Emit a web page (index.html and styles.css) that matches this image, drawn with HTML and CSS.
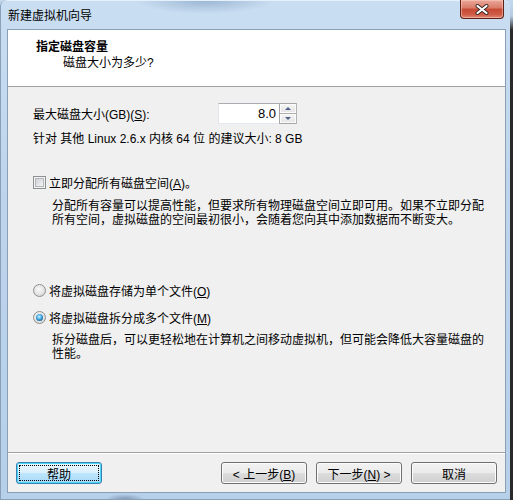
FILE: index.html
```html
<!DOCTYPE html>
<html lang="zh-CN">
<head>
    <meta charset="UTF-8">
    <title>新建虚拟机向导</title>
    <link rel="stylesheet" href="styles.css">
</head>
<body>

<div class="window">
    <div class="titlebar">
        <span class="title">新建虚拟机向导</span>
        <div class="close">
            <svg width="14" height="11" viewBox="0 0 14 11">
                <path d="M2.5 2 L11.5 9 M11.5 2 L2.5 9" stroke="#3a2622" stroke-width="4" stroke-linecap="round"/>
                <path d="M2.5 2 L11.5 9 M11.5 2 L2.5 9" stroke="#ffffff" stroke-width="2.2" stroke-linecap="round"/>
            </svg>
        </div>
    </div>

    <div class="client">
        <div class="header">
            <div class="heading">指定磁盘容量</div>
            <div class="subheading">磁盘大小为多少?</div>
        </div>

        <div class="content">
            <div class="size-row">
                <label class="size-label">最大磁盘大小(GB)(<u>S</u>):</label>
                <div class="spin">
                    <div class="spin-value">8.0</div>
                    <div class="spin-buttons">
                        <span class="spin-btn"><i class="arrow-up"></i></span>
                        <span class="spin-btn"><i class="arrow-down"></i></span>
                    </div>
                </div>
            </div>
            <p class="hint">针对 其他 Linux 2.6.x 内核 64 位 的建议大小: 8 GB</p>

            <div class="option check-row">
                <span class="checkbox"></span>
                <span>立即分配所有磁盘空间(<u>A</u>)。</span>
            </div>
            <p class="desc desc-alloc">分配所有容量可以提高性能，但要求所有物理磁盘空间立即可用。如果不立即分配所有空间，虚拟磁盘的空间最初很小，会随着您向其中添加数据而不断变大。</p>

            <div class="option radio-single">
                <span class="radio"></span>
                <span>将虚拟磁盘存储为单个文件(<u>O</u>)</span>
            </div>
            <div class="option radio-split">
                <span class="radio checked"></span>
                <span>将虚拟磁盘拆分成多个文件(<u>M</u>)</span>
            </div>
            <p class="desc desc-split">拆分磁盘后，可以更轻松地在计算机之间移动虚拟机，但可能会降低大容量磁盘的性能。</p>
        </div>

        <!-- wizard buttons -->
        <div class="footer">
            <button class="btn default">帮助</button>
            <div class="nav">
                <button class="btn">&lt; 上一步(<u>B</u>)</button>
                <button class="btn">下一步(<u>N</u>) &gt;</button>
                <button class="btn">取消</button>
            </div>
        </div>
    </div>
</div>

</body>
</html>
```

FILE: styles.css
```css
/* Basic styling */
body {
    margin: 0;
    background: linear-gradient(#c3d9ee 0, #b5cbe2 16px, #2a2a2a 30px);
    font-family: "Liberation Sans", "Noto Sans CJK SC", sans-serif;
    font-size: 12px;
    color: #000;
}

/* Aero window frame */
.window {
    width: 510px;
    height: 500px;
    box-sizing: border-box;
    padding: 0 4px 7px 7px;
    display: flex;
    flex-direction: column;
    border-radius: 6px 6px 0 0;
    background:
        radial-gradient(ellipse 70px 14px at 205px 0, rgba(95, 130, 170, 0.45), transparent),
        radial-gradient(ellipse 20px 6px at 125px 500px, rgba(60, 80, 110, 0.5), transparent),
        linear-gradient(#cadef2, #bcd4ec 40%, #b7d0ea);
    box-shadow: inset 1px 0 #8aa0b8, inset 0 -1px #8aa0b8, inset 0 1px #e6f0fa;
}

.titlebar {
    height: 29px;
    display: flex;
    justify-content: space-between;
    align-items: flex-start;
}

.title {
    padding: 9px 0 0 1px;
    line-height: 14px;
}

.close {
    width: 44px;
    height: 19px;
    margin-right: 2px;
    box-sizing: border-box;
    border: 1px solid #5e2118;
    border-top: none;
    border-radius: 0 0 4px 4px;
    background: linear-gradient(#eaa89a, #d97b67 45%, #c64a34 50%, #cf5b45 80%, #e08a74);
    box-shadow: inset 0 0 0 1px rgba(255, 210, 200, 0.5);
    display: flex;
    align-items: center;
    justify-content: center;
}

/* Client area */
.client {
    flex: 1;
    display: flex;
    flex-direction: column;
    border: 1px solid #8b9fb4;
    background: #f0f0f0;
}

.header {
    height: 57px;
    box-sizing: border-box;
    padding-top: 9px;
    background: #fff;
    border-bottom: 1px solid #a0a0a0;
}

.heading {
    font-weight: bold;
    line-height: 16px;
    padding-left: 28px;
}

.subheading {
    line-height: 16px;
    padding-left: 55px;
}

.content {
    flex: 1;
    padding: 16px 0 0 25px;
}

.size-row {
    display: flex;
    align-items: center;
    height: 21px;
}

.size-label {
    width: 185px;
}

/* Spin box */
.spin {
    width: 79px;
    height: 21px;
    box-sizing: border-box;
    display: flex;
    border: 1px solid;
    border-color: #abadb3 #dbdfe6 #e3e9ef #e2e3ea;
    background: #fff;
}

.spin-value {
    flex: 1;
    text-align: right;
    padding-right: 3px;
    line-height: 19px;
    font-size: 13px;
}

.spin-buttons {
    width: 16px;
    display: flex;
    flex-direction: column;
    border: 1px solid #a6a6a6;
    border-right-color: #b4b4b4;
    margin: -1px -1px -1px 0;
}

.spin-btn {
    flex: 1;
    display: flex;
    align-items: center;
    justify-content: center;
    background: linear-gradient(#f6f6f6, #e3e3e3);
    box-shadow: inset 0 0 0 1px #fcfcfc;
}

.spin-btn + .spin-btn {
    border-top: 1px solid #b0b0b0;
}

.arrow-up,
.arrow-down {
    width: 0;
    height: 0;
    border-left: 3px solid transparent;
    border-right: 3px solid transparent;
}

.arrow-up {
    border-bottom: 3px solid #4d5f88;
}

.arrow-down {
    border-top: 3px solid #4d5f88;
}

.hint {
    margin: 7px 0 0;
    line-height: 16px;
}

/* Check box and radio options */
.option {
    display: flex;
    align-items: center;
    gap: 3px;
    height: 16px;
}

.check-row {
    margin-top: 27px;
}

.radio-single {
    margin-top: 55px;
}

.radio-split {
    margin-top: 11px;
}

.checkbox {
    width: 13px;
    height: 13px;
    box-sizing: border-box;
    padding: 1px;
    border: 1px solid #8e8f8f;
    background: #f4f4f4;
}

.checkbox::before {
    content: "";
    display: block;
    height: 100%;
    box-sizing: border-box;
    border: 1px solid #b3b6bb;
    background: linear-gradient(135deg, #cdd0d5, #f6f6f6);
}

.radio {
    width: 13px;
    height: 13px;
    box-sizing: border-box;
    border-radius: 50%;
    border: 1px solid #8e8f8f;
    background: radial-gradient(circle at 45% 40%, #f9f9f9, #e4e4e4 55%, #c9cacc);
    display: flex;
    align-items: center;
    justify-content: center;
}

.radio.checked::before {
    content: "";
    width: 7px;
    height: 7px;
    border-radius: 50%;
    background: radial-gradient(circle at 45% 40%, #d6f3ff, #48b2ec 40%, #1d5f93 75%, #173f66);
}

.desc {
    width: 436px;
    margin: 0 0 0 19px;
    line-height: 14px;
}

.desc-alloc {
    margin-top: 9px;
}

.desc-split {
    margin-top: 8px;
}

/* Footer buttons */
.footer {
    display: flex;
    justify-content: space-between;
    padding: 9px 8px 8px;
    border-top: 1px solid #a0a0a0;
    box-shadow: inset 0 1px #fff;
}

.nav {
    display: flex;
    gap: 9px;
}

.btn {
    width: 86px;
    height: 22px;
    padding: 0;
    font: inherit;
    color: #000;
    border: 1px solid #707070;
    border-radius: 3px;
    background: linear-gradient(#f2f2f2, #ebebeb 50%, #dddddd 50%, #cfcfcf);
    box-shadow: inset 0 0 0 1px #fcfcfc;
}

.btn.default {
    border-color: #3c7fb1;
    background: linear-gradient(#eaf6fd, #d9f0fc 50%, #bee6fd 50%, #a7d9f5);
    box-shadow: inset 0 0 0 1px #48d8fb;
    outline: 1px dotted #000;
    outline-offset: -4px;
}
```
